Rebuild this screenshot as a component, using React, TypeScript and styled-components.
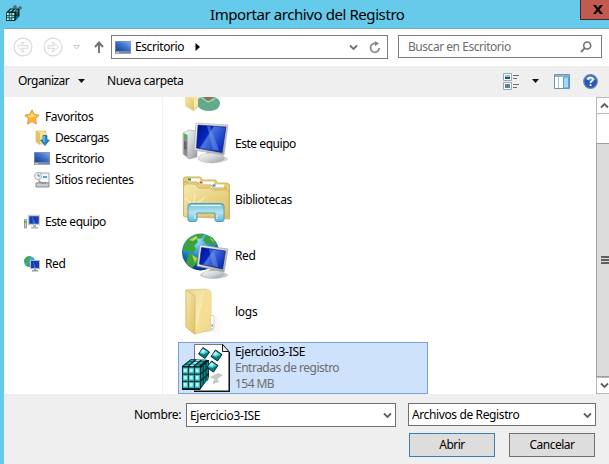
import React from 'react';
import styled, { createGlobalStyle } from 'styled-components';

const GlobalStyle = createGlobalStyle`
  * { box-sizing: border-box; }
  body { margin: 0; overflow: hidden; }
  svg { display: block; flex: none; }
`;

const Window = styled.div`
  width: 609px;
  height: 464px;
  display: flex;
  flex-direction: column;
  padding-left: 4px;
  overflow: hidden;
  background: #66caea;
  color: #000;
  font-family: 'Noto Sans', 'Open Sans', sans-serif;
  font-size: 12px;
  line-height: 16px;
`;

const Label = styled.span<{ $track?: number; $muted?: boolean }>`
  white-space: nowrap;
  letter-spacing: ${(p) => p.$track ?? -0.38}px;
  color: ${(p) => (p.$muted ? '#6d6d6d' : 'inherit')};
`;

const TitleBar = styled.header`
  flex: none;
  height: 29px;
  display: flex;
  align-items: flex-start;
  border-bottom: 1px solid #72acc8;
  padding-left: 1px;
`;

const AppIcon = styled.div`
  padding-top: 5px;
  width: 205px;
`;

const Title = styled.h1`
  flex: 1;
  margin: 0;
  font-size: 15px;
  font-weight: 400;
  line-height: 28px;
`;

const CloseButton = styled.button`
  width: 29px;
  height: 20px;
  padding: 0 0 0 12px;
  border: 1px solid #45282b;
  border-top: 0;
  border-right: 0;
  background: #c35a50;
`;

const NavBar = styled.nav`
  flex: none;
  height: 37px;
  display: flex;
  align-items: flex-start;
  padding-top: 6px;
  background: #fff;
`;

const History = styled.div`
  width: 107px;
  height: 24px;
  display: flex;
  align-items: center;
  padding-left: 9px;
`;

const AddressBox = styled.div`
  width: 277px;
  height: 24px;
  display: flex;
  align-items: center;
  border: 1px solid #7d7d7d;
  padding: 0 6px 0 3px;
`;

const Crumb = styled.div`
  flex: 1;
  display: flex;
  align-items: center;
  gap: 4px;
`;

const SearchBox = styled.div`
  width: 204px;
  height: 23px;
  margin-left: 10px;
  display: flex;
  align-items: center;
  justify-content: space-between;
  border: 1px solid #7d7d7d;
  padding: 0 9px;
`;

const CommandBar = styled.div`
  flex: none;
  height: 31px;
  display: flex;
  align-items: center;
  padding: 0 11px 1px 14px;
  background: #efefef;
`;

const Command = styled.div<{ $width?: number }>`
  width: ${(p) => (p.$width ? `${p.$width}px` : 'auto')};
  display: flex;
  align-items: center;
  gap: 9px;
`;

const ViewTools = styled.div`
  margin-left: auto;
  display: flex;
  align-items: center;
`;

const Gap = styled.i<{ $w: number }>`
  width: ${(p) => p.$w}px;
  flex: none;
`;

const Content = styled.main`
  flex: none;
  height: 297px;
  display: flex;
  background: #fff;
`;

const Sidebar = styled.aside`
  width: 159px;
  border-right: 1px solid #f2f2f2;
  padding: 9px 0 0 19px;
`;

const TreeGroup = styled.div`
  margin-bottom: 21px;
`;

const TreeItem = styled.div<{ $child?: boolean }>`
  height: 21px;
  display: flex;
  align-items: center;
  gap: 5px;
  padding-left: ${(p) => (p.$child ? 11 : 1)}px;
`;

const FileList = styled.section`
  flex: 1;
  overflow: hidden;
  padding-left: 15px;
`;

const Entry = styled.div<{ $clipped?: boolean; $selected?: boolean }>`
  width: 250px;
  height: ${(p) => (p.$clipped ? 19 : p.$selected ? 52 : 56)}px;
  display: flex;
  align-items: ${(p) => (p.$clipped ? 'flex-start' : 'center')};
  gap: 5px;
  padding-left: ${(p) => (p.$selected ? 3 : 4)}px;
  border: ${(p) => (p.$selected ? '1px solid #7da2ce' : '0')};
  background: ${(p) => (p.$selected ? '#cee2fc' : 'transparent')};
  margin-top: ${(p) => (p.$selected ? 2 : 0)}px;
`;

const EntryText = styled.div`
  display: flex;
  flex-direction: column;
`;

const ScrollBar = styled.div`
  width: 13px;
  display: flex;
  flex-direction: column;
  border-left: 1px solid #b9b9b9;
  background: #fff;
`;

const ScrollArrow = styled.div`
  height: 17px;
  display: flex;
  align-items: center;
  padding-left: 3px;
  border: solid #b9b9b9;
  border-width: 1px 0;
`;

const ScrollTrack = styled.div`
  flex: 1;
  padding-top: 29px;
`;

const Thumb = styled.div`
  height: 234px;
  margin-left: -1px;
  border: solid #a0a0a0;
  border-width: 1px 0 1px 1px;
  background: #dcdcdc;
  display: flex;
  align-items: center;
  padding-left: 4px;
`;

const Footer = styled.footer`
  flex: 1;
  display: flex;
  flex-direction: column;
  gap: 6px;
  padding-top: 9px;
  background: #efefef;
`;

const FieldRow = styled.div`
  display: flex;
  height: 24px;
`;

const FieldLabel = styled.label`
  width: 182px;
  padding: 4px 5px 0 0;
  text-align: right;
`;

const Combo = styled.div<{ $type?: boolean }>`
  width: ${(p) => (p.$type ? 188 : 210)}px;
  height: ${(p) => (p.$type ? 23 : 24)}px;
  margin-left: ${(p) => (p.$type ? 12 : 0)}px;
  display: flex;
  align-items: center;
  justify-content: space-between;
  padding: 1px 3px 0 3px;
  background: #fff;
  border: 1px solid #707070;
`;

const ButtonRow = styled.div`
  display: flex;
  gap: 14px;
  padding-left: 405px;
`;

const Button = styled.button<{ $primary?: boolean }>`
  width: 86px;
  height: 24px;
  padding: 0;
  font: inherit;
  color: #000;
  background: #dddddd;
  border: 1px solid ${(p) => (p.$primary ? '#3c7fb1' : '#707070')};
`;

const Chevron = ({ up = false, color = '#606060' }: { up?: boolean; color?: string }) => (
  <svg width="9" height="7" viewBox="0 0 9 7">
    <path d={up ? 'M1 5.5 4.5 2 8 5.5' : 'M1 1.5 4.5 5 8 1.5'} fill="none" stroke={color} strokeWidth="1.8" />
  </svg>
);

const DownTriangle = () => (
  <svg width="7" height="4" viewBox="0 0 7 4"><path d="M0 0h7L3.5 4z" fill="#111" /></svg>
);

const HistoryArrow = ({ forward = false }: { forward?: boolean }) => (
  <svg width="20" height="20" viewBox="0 0 20 20" fill="none" stroke="#d8d8d8">
    <circle cx="10" cy="10" r="8.900" strokeWidth="1.100" />
    <path transform={forward ? 'translate(20) scale(-1 1)' : undefined} d="M4.6 10 9 5.6h2.2L8.1 8.7H15v2.6H8.1l3.1 3.1H9z" />
  </svg>
);

const DesktopIcon = () => (
  <svg width="16" height="13" viewBox="0 0 16 13">
    <defs>
      <linearGradient id="desk" x1="0" y1="1" x2="1" y2="0">
        <stop stopColor="#173f92" /><stop offset=".55" stopColor="#3f72cb" /><stop offset="1" stopColor="#7eaaf0" />
      </linearGradient>
    </defs>
    <path d="M0 0h16v12.5H0z" fill="#8795ab" />
    <path d="M.7.7h14.6v9.3H.7z" fill="url(#desk)" />
    <path d="M0 10.5h16v2H0z" fill="#75869a" /><path d="M1 11h3v1H1z" fill="#b7d1de" />
  </svg>
);

const LooseCube = ({ x, y }: { x: number; y: number }) => (
  <g transform={`translate(${x} ${y})`}>
    <path d="M-1-5.500 5.500-1 1 5.500-5.500 1z" fill="#067b80" stroke="#022e30" strokeWidth="1" />
    <path d="M-1-4.500 4.300-1-.5 1.500-4.500 0z" fill="#54cdd0" />
    <path d="M-1-4 1.500-2-1 0-3.500-1z" fill="#b5f3f2" />
  </g>
);

const CubeStack = () => (
  <g>
    <path d="M0 22 9 15l18 1v17l-9 13H0z" fill="#021e20" />
    {[0, 1, 2].map((r) => [0, 1, 2].map((c) => (
      <g key={`${r}${c}`}>
        <path d={`M${0.8 + c * 6} ${23.5 + r * 7.2}h5.200v6.200h-5.200z`} fill="#2fb9bc" />
        <path d={`M${1.6 + c * 6} ${24.6 + r * 7.2}h3.200v3.600h-3.200z`} fill="#b2f3f1" />
      </g>
    )))}
    {[0, 1, 2].map((r) => [0, 1, 2].map((c) => (
      <path key={`t${r}${c}`} d={`M${1.5 + c * 5.7 + r * 2.7} ${22 - r * 2.3}l2.400-1.800 3.600.2-2.200 1.800z`} fill={c === 1 ? '#8ceeee' : '#22a9ad'} />
    )))}
    {[0, 1, 2].map((r) => [0, 1, 2].map((c) => (
      <path key={`s${r}${c}`} d={`M${18.8 + c * 2.8} ${24 - c * 2.5 + r * 6.8}l2-1.900v5l-2 2.200z`} fill="#078287" />
    )))}
  </g>
);

const RegistryIcon = () => (
  <svg width="48" height="48" viewBox="0 0 48 48">
    <path d="M12.5.5H41l6 7.500v39H12.500z" fill="#fff" stroke="#777" />
    <path d="M40.500.5v7H47z" fill="#eee" stroke="#111" />
    <path d="M47.300 8v39.300H12" fill="none" stroke="#111" strokeWidth="1.300" />
    <path d="m28 33 8-4 5 2-7 5zM31 37l4-3 2 4-6 2z" fill="#c8c8c8" />
    <CubeStack />
    <LooseCube x={22} y={9} /><LooseCube x={34.5} y={11.5} /><LooseCube x={30.5} y={22.5} />
  </svg>
);

const RegeditIcon = () => (
  <svg width="17" height="17" viewBox="0 0 17 17">
    <path d="M1 8 5 3.500h9.500V11L10 16H1z" fill="#04262a" />
    {[0, 1, 2].map((r) => [0, 1, 2].map((c) => (
      <path key={`${r}${c}`} d={`M${1.8 + c * 2.7} ${8 + r * 2.6}h2v1.900h-2z`} fill={(r + c) % 2 ? '#45dce0' : '#d5ffff'} />
    )))}
    <path d="m4 6.500 2-2h2l-2 2zm4 0 2-2h2l-2 2z" fill="#73e7e8" />
    <path d="m11 8 2-2v2l-2 2zm0 4 2-2v2l-2 2z" fill="#06898e" />
    <path d="m8 2 2-2 2 2-2 2zm5 1 2-2 2 2-2 2zm-3 3 2-2 2 2-2 2z" fill="#18494c" />
    <path d="M9.500 1.500h1v1h-1zm5 1h1v1h-1zm-3 3h1v1h-1z" fill="#dff" />
  </svg>
);

const FolderDefs = () => (
  <defs>
    <linearGradient id="folderBack" x1="0" y1="0" x2="1" y2="1"><stop stopColor="#ead58c" /><stop offset=".6" stopColor="#fbeeb5" /><stop offset="1" stopColor="#dfbd57" /></linearGradient>
    <linearGradient id="folderFront" x1="0" y1="0" x2="1" y2="1"><stop stopColor="#f6e8aa" /><stop offset="1" stopColor="#dfc068" /></linearGradient>
    <linearGradient id="glass" x1="0" y1="0" x2="0" y2="1"><stop stopColor="#74bfd5" /><stop offset=".5" stopColor="#b8e4ef" /><stop offset="1" stopColor="#62b8da" /></linearGradient>
    <linearGradient id="floor" x1="0" y1="0" x2="1" y2="0"><stop stopColor="#999" /><stop offset="1" stopColor="#fff" stopOpacity="0" /></linearGradient>
  </defs>
);

const FolderIcon = () => (
  <svg width="48" height="48" viewBox="0 0 48 48">
    <FolderDefs />
    <path d="m14 44 20-17 10 12-8 5z" fill="url(#floor)" opacity=".7" />
    <path d="M4 2 24 1l5 2.500v24l2 1V41l-18 5-9-7z" fill="url(#folderBack)" stroke="#d8bd67" strokeWidth=".7" />
    <path d="M23 4 29 3.500v25l2 1V41l-18 4z" fill="#f3dc91" opacity=".8" />
    <path d="m4 2 9 6v38.500L4 39z" fill="url(#folderFront)" stroke="#d3b45c" strokeWidth=".7" />
    <path d="M28.500 27.500h3.500V40l-3.500 1z" fill="#f8fcff" stroke="#d9c37a" strokeWidth=".6" /><path d="M29.500 36.500h1.500v2h-1.500z" fill="#4b9be3" />
  </svg>
);

const LibrariesIcon = () => (
  <svg width="48" height="48" viewBox="0 0 48 48">
    <FolderDefs />
    <path d="M1.500 40V3q0-2 2-2h15l2 3h13l2 3h9q3 0 3 3v33z" fill="#e7cf79" stroke="#cfb362" />
    <path d="M6 2.500h12v4H6zM17 5.500h15v4H17zM29 8.500h13v4H29z" fill="#fff" />
    <path d="M6 2.500h3v2H6z" fill="#159c3d" /><path d="M17.500 5.500h3v2h-3z" fill="#df442b" /><path d="M30.500 8.500h3v2h-3z" fill="#268bd3" />
    <path d="M2 6h13l2.500 3H29l2 3h14" fill="none" stroke="#c7a44c" />
    <path d="M1.500 11q0-3 3-3h9l3 4h12l3 2h13q2.500 0 2.500 3v22q0 2-2 2H3.500q-2 0-2-2z" fill="url(#folderFront)" stroke="#d3b76a" />
    <path d="m13 18-2 11m2 0 10-8M11 29l-8-7m8 7-7 7m7-7v11" stroke="#fff9cf" strokeWidth="1.200" opacity=".6" />
    <path d="M9 27.500q-3 0-3 3V43.500q0 2 2 2h5q2 0 2-2V37h18v6.500q0 2 2 2h5q2 0 2-2v-13q0-3-3-3z" fill="url(#glass)" stroke="#4b9ebc" />
    <path d="M9 29.500h30M13 39v4m22-4v4" stroke="#e1f9ff" />
  </svg>
);

const MonitorDefs = () => (
  <defs>
    <linearGradient id="screen" x1="0" y1="0" x2="1" y2=".6"><stop stopColor="#00128c" /><stop offset=".43" stopColor="#0628bd" /><stop offset=".48" stopColor="#4a73dd" /><stop offset="1" stopColor="#0b2fc0" /></linearGradient>
    <linearGradient id="metal" x1="0" y1="0" x2="1" y2="1"><stop stopColor="#fafafa" /><stop offset=".5" stopColor="#d2d5d7" /><stop offset="1" stopColor="#92989d" /></linearGradient>
  </defs>
);

const ComputerIcon = () => (
  <svg width="48" height="48" viewBox="0 0 48 48">
    <MonitorDefs />
    <ellipse cx="31" cy="39" rx="15" ry="3.500" fill="#bbb" opacity=".6" />
    <path d="m1 13 6-3 8 1v26l-8 2-6-5z" fill="url(#metal)" stroke="#aaa" strokeWidth=".7" />
    <path d="m1.500 13 4 2v22l-4-3z" fill="#8b8b8b" /><path d="m2 14 2.500 1v3L2 17z" fill="#28d329" /><path d="m2 21 2.500 1v8L2 29z" fill="#666" />
    <path d="m25 32 9 1 2 5H26z" fill="#989fa4" /><ellipse cx="29.500" cy="38" rx="13" ry="5" fill="url(#metal)" stroke="#bbb" strokeWidth=".5" />
    <path d="m14 3 32 2-4 30-30-5z" fill="url(#metal)" stroke="#aab1b8" strokeWidth=".7" />
    <path d="m16 5 28 2-4 25.500-25.500-4.500z" fill="url(#screen)" stroke="#07156c" strokeWidth=".6" /><path d="m25 6 6 23.500 6 1L28 6z" fill="#88a8f4" opacity=".4" />
  </svg>
);

const NetworkIcon = () => (
  <svg width="48" height="48" viewBox="0 0 48 48">
    <MonitorDefs />
    <defs><radialGradient id="earth" cx=".4" cy=".2" r=".8"><stop stopColor="#9de4ff" /><stop offset=".5" stopColor="#1e88c9" /><stop offset="1" stopColor="#062e80" /></radialGradient></defs>
    <ellipse cx="32" cy="43" rx="14" ry="3.500" fill="#aaa" opacity=".6" />
    <circle cx="18.500" cy="20" r="18.500" fill="url(#earth)" />
    <path d="M6 7q7-6 16-5l-2 4-5 1 1 3-4 4 2 3-3 4-5-3-4 3Q0 15 6 7zM23 4l7 1 5 8-3 1-3-3-5 1-3-4zM7 21l9 4-1 6-5 5-6-5z" fill="#3ca238" />
    <path d="m7 8 7-4 2 2-5 3zM10 23l5 3-2 5zM27 5l4 3 1 3z" fill="#b6d85a" />
    <path d="m27 38 6-1 3 6h-8z" fill="#8f969b" /><ellipse cx="31" cy="42.500" rx="11" ry="4" fill="url(#metal)" stroke="#bbb" strokeWidth=".5" />
    <path d="m18 13 28 4-4 23-27-6z" fill="url(#metal)" stroke="#9ba3aa" strokeWidth=".7" />
    <path d="m19.500 15.500 24 3.500-3 18-23-5z" fill="url(#screen)" stroke="#07156c" strokeWidth=".6" /><path d="m27 17 4 17 5 1-4-17z" fill="#85a4ef" opacity=".4" />
  </svg>
);

const UserFolderIcon = () => (
  <svg width="46" height="18" viewBox="0 0 46 18">
    <FolderDefs />
    <path d="m25 0h18l-5 11H26z" fill="url(#floor)" opacity=".7" />
    <path d="M3 0h15v9l-6 5-9-5z" fill="url(#folderBack)" /><path d="m3 0 9 2v12L3 9z" fill="url(#folderFront)" />
    <path d="M16 3q0-3 7-3h9q6 2 6 6 0 7-10 8-10 0-12-5z" fill="#63aa8c" /><path d="M22 0h8l-2 4-4-1z" fill="#a0674d" /><path d="m20 1 6 4 7-3" stroke="#a4d3bc" fill="none" strokeWidth="1.500" />
  </svg>
);

const StarIcon = () => (
  <svg width="16" height="16" viewBox="0 0 16 16"><path d="m8 .8 2.200 4.600 5 .8-3.700 3.600.9 5.200L8 12.500 3.500 15l.9-5.200L.8 6.200l5-.8z" fill="#ffb52c" stroke="#e09a48" /><path d="m8 3 1.300 3.300 3.200.5-6 2L3 7l3.500-.6z" fill="#ffe47e" /></svg>
);

const DownloadsIcon = () => (
  <svg width="16" height="16" viewBox="0 0 16 16"><path d="M2 1h10v13H5l-3-2z" fill="#f5e294" stroke="#d9bf67" strokeWidth=".7" /><path d="m2 1 4 2v12l-4-3z" fill="#e2c467" /><path d="M9 5.500h4V10h2.500L11 15.500 6.500 10H9z" fill="#2488cf" stroke="#16629f" strokeWidth=".7" /><path d="M10 6v6" stroke="#a1dcff" /></svg>
);

const RecentIcon = () => (
  <svg width="16" height="16" viewBox="0 0 16 16"><path d="M5 1h10v10H5z" fill="#f4f8fa" stroke="#a3a9ad" /><path d="M9 4h4v2H9z" fill="#49a6df" /><path d="M2 11h13v4H2z" fill="#c7ccce" stroke="#888d91" /><path d="m5 9 3 2h4" fill="none" stroke="#7c868d" /><circle cx="4" cy="4" r="3.500" fill="#edf2f5" stroke="#a9b2b8" /><path d="M4 2v2h2" fill="none" stroke="#777" /></svg>
);

const SmallComputer = () => (
  <svg width="16" height="16" viewBox="0 0 16 16"><path d="M.5 5.500h2v8.500h-2z" fill="#c9cfce" stroke="#959d9a" /><path d="M0 7h1.500v2H0z" fill="#23ba25" /><path d="M4.500 1.500h11v9h-11z" fill="#173cb4" stroke="#c6ccd1" strokeWidth="1.500" /><path d="m8 2 4 8H9z" fill="#6689dc" opacity=".6" /><path d="M9 11h3v2h2v1.500H7V13h2z" fill="#aeb5b8" /></svg>
);

const SmallNetwork = () => (
  <svg width="16" height="16" viewBox="0 0 16 16"><circle cx="5.500" cy="5.500" r="5.500" fill="#43a9dc" /><path d="M0 5q1-4 5-5l2 2-3 1 1 3-2 2zM3 8l3 1v2q-3 0-4-2z" fill="#42a642" /><path d="M6.500 4.500h9v8h-9z" fill="#173cb4" stroke="#b3bec9" /><path d="m9 5 3 7h-2z" fill="#668be4" opacity=".6" /><path d="M10 13h2v1h2v1.500H8V14h2z" fill="#8ca0b1" /></svg>
);

export default function App() {
  return (
    <>
      <GlobalStyle />
      <Window>
        <TitleBar>
          <AppIcon><RegeditIcon /></AppIcon>
          <Title><Label $track={-0.42}>Importar archivo del Registro</Label></Title>
          <CloseButton aria-label="Cerrar">
            <svg width="10" height="9" viewBox="0 0 10 9"><path d="M0 0h3l2 2.700L7 0h3L6.500 4.500 10 9H7L5 6.300 3 9H0l3.500-4.500z" fill="#080808" /></svg>
          </CloseButton>
        </TitleBar>
        <NavBar>
          <History>
            <HistoryArrow /><Gap $w={10} /><HistoryArrow forward /><Gap $w={10} />
            <svg width="7" height="5" viewBox="0 0 7 5"><path d="M.5.5h6l-3 3.500z" fill="none" stroke="#c8c8c8" /></svg>
            <Gap $w={14} />
            <svg width="10" height="12" viewBox="0 0 10 12"><path d="M5 12V1.500M1 6l4-4.500L9 6" fill="none" stroke="#707070" strokeWidth="1.900" /></svg>
          </History>
          <AddressBox>
            <Crumb><DesktopIcon /><Label $track={-0.4}>Escritorio</Label><Gap $w={3} /><svg width="5" height="8" viewBox="0 0 5 8"><path d="M.5 0v8L5 4z" fill="#000" /></svg></Crumb>
            <Chevron color="#707070" /><Gap $w={11} />
            <svg width="12" height="13" viewBox="0 0 12 13"><path d="M6.500 2.500A4.400 4.400 0 1 0 10.300 7" fill="none" stroke="#858585" strokeWidth="1.700" /><path d="M6 0v5.200l4-2.600z" fill="#858585" /></svg>
          </AddressBox>
          <SearchBox>
            <Label $muted $track={-0.46}>Buscar en Escritorio</Label>
            <svg width="12" height="12" viewBox="0 0 12 12"><circle cx="7.200" cy="4.500" r="3.500" fill="none" stroke="#727272" strokeWidth="1.600" /><path d="M4.800 7.200 1 11" stroke="#727272" strokeWidth="1.800" /></svg>
          </SearchBox>
        </NavBar>
        <CommandBar>
          <Command $width={89}><Label $track={-0.55}>Organizar</Label><DownTriangle /></Command>
          <Label $track={-0.42}>Nueva carpeta</Label>
          <ViewTools>
            <svg width="17" height="17" viewBox="0 0 17 17"><path d="M.5.5h8v7h-8zM.5 9.500h8v7h-8z" fill="#fff" stroke="#9aa8b2" /><path d="M2 2h5v4H2z" fill="#75cce5" /><path d="M2 4h5v2H2z" fill="#234e84" /><path d="M2 11h5v4H2z" fill="#467de4" /><path d="M2 11h2v2H2z" fill="#e24d35" /><path d="M5 13h2v2H5z" fill="#4c9c35" /><path d="M10 2.500h6M10 5.500h4M10 11.500h6M10 14.500h4" stroke="#5d7180" /></svg>
            <Gap $w={12} /><DownTriangle /><Gap $w={15} />
            <svg width="16" height="15" viewBox="0 0 16 15"><path d="M.5.5h15v14H.5z" fill="#fff" stroke="#6f93ad" /><path d="M1 1h14v2H1z" fill="#91b2c9" /><path d="M9.500 3h5v11h-5z" fill="#a6d7fb" stroke="#4aa2df" /><path d="M4.500 3v11" stroke="#a9bbc8" /></svg>
            <Gap $w={13} />
            <svg width="15" height="15" viewBox="0 0 15 15"><circle cx="7.500" cy="7.500" r="6.800" fill="#2458bd" stroke="#7280a0" strokeWidth="1.200" /><path d="M2 5q5-6 11 0-3 3-11 0" fill="#6493e6" /><path d="M5 5.800Q5 3.600 7.500 3.600T10 5.500Q10 6.600 8.600 7.300 7.500 7.900 7.500 9" fill="none" stroke="#fff" strokeWidth="1.800" /><path d="M6.600 10.200h1.900V12H6.600z" fill="#fff" /></svg>
          </ViewTools>
        </CommandBar>
        <Content>
          <Sidebar>
            <TreeGroup>
              <TreeItem><StarIcon /><Label>Favoritos</Label></TreeItem>
              <TreeItem $child><DownloadsIcon /><Label $track={-0.52}>Descargas</Label></TreeItem>
              <TreeItem $child><DesktopIcon /><Label $track={-0.4}>Escritorio</Label></TreeItem>
              <TreeItem $child><RecentIcon /><Label>Sitios recientes</Label></TreeItem>
            </TreeGroup>
            <TreeGroup><TreeItem><SmallComputer /><Label $track={-0.46}>Este equipo</Label></TreeItem></TreeGroup>
            <TreeGroup><TreeItem><SmallNetwork /><Label>Red</Label></TreeItem></TreeGroup>
          </Sidebar>
          <FileList>
            <Entry $clipped><UserFolderIcon /></Entry>
            <Entry><ComputerIcon /><Label $track={-0.46}>Este equipo</Label></Entry>
            <Entry><LibrariesIcon /><Label>Bibliotecas</Label></Entry>
            <Entry><NetworkIcon /><Label>Red</Label></Entry>
            <Entry><FolderIcon /><Label $track={-0.25}>logs</Label></Entry>
            <Entry $selected>
              <RegistryIcon />
              <EntryText><Label $track={-0.3}>Ejercicio3-ISE</Label><Label $muted $track={-0.5}>Entradas de registro</Label><Label $muted $track={-0.55}>154 MB</Label></EntryText>
            </Entry>
          </FileList>
          <ScrollBar>
            <ScrollArrow><Chevron up /></ScrollArrow>
            <ScrollTrack>
              <Thumb><svg width="8" height="8" viewBox="0 0 8 8"><path d="M0 1h8M0 4h8M0 7h8" stroke="#606060" strokeWidth="2" /></svg></Thumb>
            </ScrollTrack>
            <ScrollArrow><Chevron /></ScrollArrow>
          </ScrollBar>
        </Content>
        <Footer>
          <FieldRow>
            <FieldLabel><Label>Nombre:</Label></FieldLabel>
            <Combo><Label $track={-0.3}>Ejercicio3-ISE</Label><Chevron /></Combo>
            <Combo $type><Label>Archivos de Registro</Label><Chevron /></Combo>
          </FieldRow>
          <ButtonRow>
            <Button $primary><Label $track={-0.5}>Abrir</Label></Button>
            <Button><Label $track={-0.5}>Cancelar</Label></Button>
          </ButtonRow>
        </Footer>
      </Window>
    </>
  );
}
